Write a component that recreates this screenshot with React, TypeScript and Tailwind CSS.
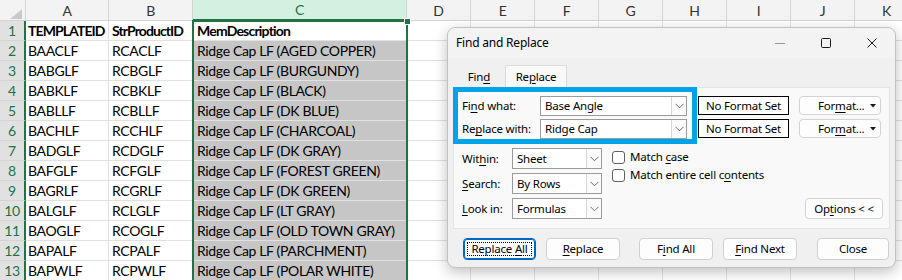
import React from "react";

const columns = [
  { label: "A", w: "w-[83px]" },
  { label: "B", w: "w-[84px]" },
  { label: "C", w: "w-[214px]" },
  { label: "D", w: "w-[64px]" },
  { label: "E", w: "w-[64px]" },
  { label: "F", w: "w-[64px]" },
  { label: "G", w: "w-[64px]" },
  { label: "H", w: "w-[64px]" },
  { label: "I", w: "w-[64px]" },
  { label: "J", w: "w-[64px]" },
  { label: "K", w: "w-[64px]" },
];

const rows = [
  ["BAACLF", "RCACLF", "AGED COPPER"],
  ["BABGLF", "RCBGLF", "BURGUNDY"],
  ["BABKLF", "RCBKLF", "BLACK"],
  ["BABLLF", "RCBLLF", "DK BLUE"],
  ["BACHLF", "RCCHLF", "CHARCOAL"],
  ["BADGLF", "RCDGLF", "DK GRAY"],
  ["BAFGLF", "RCFGLF", "FOREST GREEN"],
  ["BAGRLF", "RCGRLF", "DK GREEN"],
  ["BALGLF", "RCLGLF", "LT GRAY"],
  ["BAOGLF", "RCOGLF", "OLD TOWN GRAY"],
  ["BAPALF", "RCPALF", "PARCHMENT"],
  ["BAPWLF", "RCPWLF", "POLAR WHITE"],
];

const U = ({ children }: { children: React.ReactNode }) => (
  <span className="underline decoration-1 underline-offset-[2px]">{children}</span>
);

const Chevron = () => (
  <svg width="9" height="6" viewBox="0 0 9 6" fill="none">
    <path d="M0.5 0.8 L4.5 4.8 L8.5 0.8" stroke="#6b6b6b" strokeWidth="1" />
  </svg>
);

const Combo = ({ value, w }: { value: string; w: string }) => (
  <div className={`flex h-full ${w} items-stretch border border-[#9a9a9a] bg-white`}>
    <div className="flex flex-1 items-center pl-[4px]">{value}</div>
    <div className="flex w-[15px] items-center justify-center border-l border-[#d6d6d6] bg-[#fbfbfb]">
      <Chevron />
    </div>
  </div>
);

const Checkbox = ({ children }: { children: React.ReactNode }) => (
  <div className="flex h-[18px] items-center gap-[5px]">
    <div className="h-[13px] w-[13px] rounded-[3px] border border-[#5f5f5f] bg-white" />
    <span>{children}</span>
  </div>
);

const Button = ({
  children,
  w,
  primary,
}: {
  children: React.ReactNode;
  w: string;
  primary?: boolean;
}) => (
  <div
    className={`relative flex h-[22px] ${w} items-center justify-center rounded-[4px] border bg-[#fdfdfd] ${
      primary ? "border-[#0067c0] shadow-[inset_0_0_0_1px_#0067c0]" : "border-[#d0d0d0]"
    }`}
  >
    {primary && (
      <span className="absolute inset-[3px] border border-dotted border-black" />
    )}
    <span>{children}</span>
  </div>
);

const Sheet = () => (
  <div className="font-['Lato',sans-serif] text-[14px] tracking-[-0.35px] text-black">
    {/* column headers */}
    <div className="flex h-[21px]">
      <div className="relative w-[26px] shrink-0 border-r border-b border-[#d4d4d4] bg-[#f3f3f3]">
        <svg className="absolute right-[3px] bottom-[1px]" width="12" height="10" viewBox="0 0 12 10">
          <polygon points="12,0 12,10 0,10" fill="#c9c9c9" />
        </svg>
      </div>
      {columns.map((c) =>
        c.label === "C" ? (
          <div
            key={c.label}
            className={`${c.w} shrink-0 flex items-center justify-center border-r border-b-2 border-r-[#d4d4d4] border-b-[#217346] bg-[#d3f0e0] text-[14px] text-[#217346]`}
          >
            {c.label}
          </div>
        ) : (
          <div
            key={c.label}
            className={`${c.w} shrink-0 flex items-center justify-center border-r border-b border-[#d4d4d4] bg-[#f3f3f3] text-[14px] text-[#333]`}
          >
            {c.label}
          </div>
        )
      )}
    </div>

    {/* rows */}
    {[["TEMPLATEID", "StrProductID", "MemDescription"], ...rows].map((r, i) => (
      <div key={i} className="flex h-[20px]">
        <div className="flex w-[26px] shrink-0 items-center justify-center border-b border-r-2 border-b-[#d4d4d4] border-r-[#217346] bg-[#e1e1e1] text-[14px] text-[#217346]">
          {i + 1}
        </div>
        <div className={`w-[83px] shrink-0 overflow-hidden whitespace-nowrap border-r border-b border-[#e1e1e1] pl-[2px] leading-[19px] ${i === 0 ? "font-bold tracking-[-0.9px]" : ""}`}>
          {r[0]}
        </div>
        <div className={`w-[84px] shrink-0 overflow-hidden whitespace-nowrap border-r border-b border-[#e1e1e1] pl-[3px] leading-[19px] ${i === 0 ? "font-bold tracking-[-0.9px]" : ""}`}>
          {r[1]}
        </div>
        <div
          className={`w-[214px] shrink-0 border-r border-b border-[#e1e1e1] pl-[4px] leading-[19px] whitespace-nowrap ${
            i === 0 ? "font-bold tracking-[-0.8px] bg-white" : "bg-[#c6c6c6]"
          }`}
        >
          {i === 0 ? r[2] : `Ridge Cap LF (${r[2]})`}
        </div>
        {columns.slice(3).map((c) => (
          <div key={c.label} className={`${c.w} shrink-0 border-r border-b border-[#e1e1e1]`} />
        ))}
      </div>
    ))}
  </div>
);

const Dialog = () => (
  <div className="absolute left-[447px] top-[27px] flex h-[241px] w-[449px] flex-col rounded-[8px] border border-[#c2c2c2] bg-[#f0f0f0] font-['Noto_Sans',sans-serif] text-[11.5px] tracking-[-0.2px] text-black shadow-[0_4px_14px_rgba(0,0,0,0.25)]">
    {/* title bar */}
    <div className="flex h-[30px] items-center rounded-t-[8px] bg-[#f3f3f3]">
      <span className="pl-[8px] text-[12px]">Find and Replace</span>
      <div className="ml-auto flex h-full">
        <div className="flex w-[46px] items-center justify-center">
          <svg width="10" height="10" viewBox="0 0 10 10">
            <path d="M0 5.5 H10" stroke="#9a9a9a" strokeWidth="1" />
          </svg>
        </div>
        <div className="flex w-[46px] items-center justify-center">
          <svg width="10" height="10" viewBox="0 0 10 10">
            <rect x="0.5" y="0.5" width="9" height="9" rx="1" fill="none" stroke="#1a1a1a" strokeWidth="1" />
          </svg>
        </div>
        <div className="flex w-[46px] items-center justify-center">
          <svg width="10" height="10" viewBox="0 0 10 10">
            <path d="M0.5 0.5 L9.5 9.5 M9.5 0.5 L0.5 9.5" stroke="#1a1a1a" strokeWidth="1" />
          </svg>
        </div>
      </div>
    </div>

    {/* tabs */}
    <div className="mt-[7px] flex h-[22px] pl-[5px]">
      <div className="flex w-[52px] items-center justify-center pt-[2px]">
        <span>
          Fin<U>d</U>
        </span>
      </div>
      <div className="flex w-[62px] items-center justify-center rounded-t-[2px] border border-b-0 border-[#dcdcdc] bg-[#f9f9f9]">
        <span>
          Re<U>p</U>lace
        </span>
      </div>
    </div>

    {/* tab panel */}
    <div className="mx-[5px] flex h-[142px] flex-col border border-[#e3e3e3] bg-[#f9f9f9]">
      <div className="flex">
        <div className="-mt-px -ml-px flex h-[57px] w-[244px] flex-col gap-[3px] border-[5px] border-[#00a2e8] pt-[4px] pl-[4px]">
          <div className="flex h-[20px] items-center">
            <span className="w-[78px]">
              Fi<U>n</U>d what:
            </span>
            <Combo value="Base Angle" w="w-[147px]" />
          </div>
          <div className="flex h-[20px] items-center">
            <span className="w-[78px]">
              Re<U>p</U>lace with:
            </span>
            <Combo value="Ridge Cap" w="w-[147px]" />
          </div>
        </div>
        <div className="ml-[1px] flex flex-col gap-[4px] pt-[8px]">
          <div className="flex h-[19px] w-[91px] items-center justify-center border border-black bg-white">
            No Format Set
          </div>
          <div className="flex h-[19px] w-[91px] items-center justify-center border border-black bg-white">
            No Format Set
          </div>
        </div>
        <div className="ml-[10px] flex flex-col gap-[4px] pt-[8px]">
          {[0, 1].map((k) => (
            <div
              key={k}
              className="flex h-[19px] w-[82px] items-center rounded-[4px] border border-[#d3d3d3] bg-[#fdfdfd] pl-[18px] pr-[4px]"
            >
              <span>
                For<U>m</U>at...
              </span>
              <svg className="ml-auto" width="6" height="4" viewBox="0 0 6 4">
                <polygon points="0,0 6,0 3,3.5" fill="#1a1a1a" />
              </svg>
            </div>
          ))}
        </div>
      </div>

      <div className="mt-[4px] flex flex-1 items-end pb-[8px] pl-[8px] pr-[6px]">
        <div className="flex flex-col gap-[4px] self-start">
          {[
            [<>Wit<U>h</U>in:</>, "Sheet"],
            [<><U>S</U>earch:</>, "By Rows"],
            [<><U>L</U>ook in:</>, "Formulas"],
          ].map(([label, val], k) => (
            <div key={k} className="flex h-[21px] items-center">
              <span className="w-[50px]">{label}</span>
              <Combo value={val as string} w="w-[90px]" />
            </div>
          ))}
        </div>
        <div className="ml-[10px] flex flex-col self-start">
          <Checkbox>
            Match <U>c</U>ase
          </Checkbox>
          <Checkbox>
            Match entire cell c<U>o</U>ntents
          </Checkbox>
        </div>
        <div className="ml-auto mb-[1px] flex h-[21px] w-[78px] items-center justify-center rounded-[4px] border border-[#d3d3d3] bg-[#fdfdfd]">
          <span>
            Op<U>t</U>ions &lt; &lt;
          </span>
        </div>
      </div>
    </div>

    {/* buttons */}
    <div className="mt-[9px] flex pl-[15px]">
      <Button w="w-[73px]" primary>
        Replace <U>A</U>ll
      </Button>
      <div className="ml-[10px]">
        <Button w="w-[74px]">
          <U>R</U>eplace
        </Button>
      </div>
      <div className="ml-[19px]">
        <Button w="w-[74px]">
          F<U>i</U>nd All
        </Button>
      </div>
      <div className="ml-[10px]">
        <Button w="w-[74px]">
          <U>F</U>ind Next
        </Button>
      </div>
      <div className="ml-[20px]">
        <Button w="w-[72px]">Close</Button>
      </div>
    </div>
  </div>
);

export default function App() {
  return (
    <div className="relative h-[280px] w-[902px] overflow-hidden bg-white">
      <Sheet />
      {/* selection outline around column C */}
      <div className="absolute left-[192px] top-[20px] h-[270px] w-[216px] border-2 border-[#217346]" />
      <div className="absolute left-[404px] top-[18px] h-[7px] w-[7px] border border-white bg-[#217346]" />
      <Dialog />
    </div>
  );
}
